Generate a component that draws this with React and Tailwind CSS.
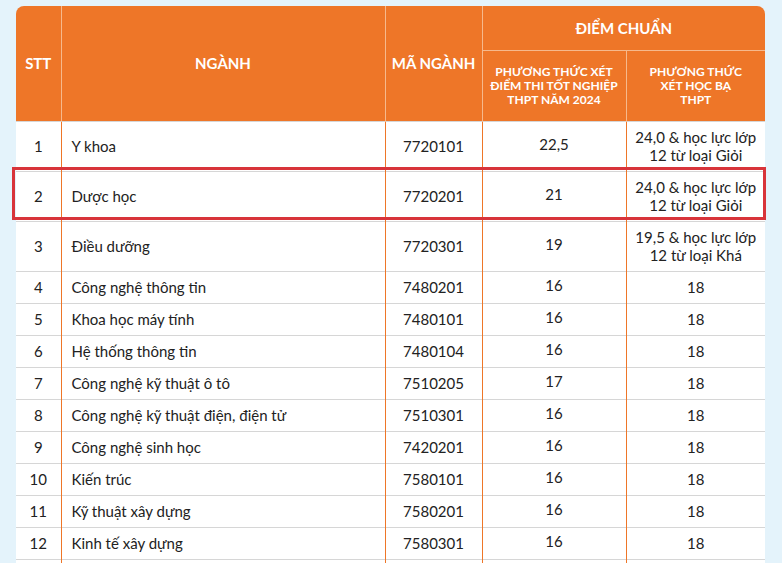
const ROWS = [
  ['1', 'Y khoa', '7720101', '22,5', '24,0 & học lực lớp 12 từ loại Giỏi'],
  ['2', 'Dược học', '7720201', '21', '24,0 & học lực lớp 12 từ loại Giỏi'],
  ['3', 'Điều dưỡng', '7720301', '19', '19,5 & học lực lớp 12 từ loại Khá'],
  ['4', 'Công nghệ thông tin', '7480201', '16', '18'],
  ['5', 'Khoa học máy tính', '7480101', '16', '18'],
  ['6', 'Hệ thống thông tin', '7480104', '16', '18'],
  ['7', 'Công nghệ kỹ thuật ô tô', '7510205', '17', '18'],
  ['8', 'Công nghệ kỹ thuật điện, điện tử', '7510301', '16', '18'],
  ['9', 'Công nghệ sinh học', '7420201', '16', '18'],
  ['10', 'Kiến trúc', '7580101', '16', '18'],
  ['11', 'Kỹ thuật xây dựng', '7580201', '16', '18'],
  ['12', 'Kinh tế xây dựng', '7580301', '16', '18'],
  ['', '', '', '', ''],
];

export default function App() {
  return (
    <div className="w-[782px] h-[563px] overflow-hidden bg-[#e4f3fb] pt-[6px] pl-[16px]" style={{ fontFamily: 'Lato, "Open Sans", sans-serif' }}>
      <div className="relative w-[749px]">
        <table className="w-[749px] table-fixed border-collapse text-[15px] text-[#222]">
          <colgroup>
            <col className="w-[45px]" />
            <col className="w-[324px]" />
            <col className="w-[97px]" />
            <col className="w-[144px]" />
            <col className="w-[139px]" />
          </colgroup>
          <thead className="text-white font-extrabold">
            <tr className="h-[44px]">
              <th rowSpan={2} className="bg-[#ee7628] rounded-tl-lg border-r border-[#f6b98c] text-[15px]">STT</th>
              <th rowSpan={2} className="bg-[#ee7628] border-r border-[#f6b98c] text-[15px]">NGÀNH</th>
              <th rowSpan={2} className="bg-[#ee7628] border-r border-[#f6b98c] text-[15px]">MÃ NGÀNH</th>
              <th colSpan={2} className="bg-[#ee7628] rounded-tr-lg border-b border-[#f6b98c] text-[15px]">ĐIỂM CHUẨN</th>
            </tr>
            <tr className="h-[71px]">
              <th className="bg-[#ee7628] border-r border-[#f6b98c] text-[12px] leading-[14px] px-1">PHƯƠNG THỨC XÉT ĐIỂM THI TỐT NGHIỆP THPT NĂM 2024</th>
              <th className="bg-[#ee7628] text-[12px] leading-[14px] px-5">PHƯƠNG THỨC XÉT HỌC BẠ THPT</th>
            </tr>
          </thead>
          <tbody className="bg-white">
            {ROWS.map((r, i) => (
              <tr key={i} className={i < 3 ? 'h-[50px] border-t border-[#d6d6d6]' : 'h-[32px] border-t border-[#d6d6d6]'}>
                <td className="text-center border-r border-[#ee7628]">{r[0]}</td>
                <td className="pl-[10px] border-r border-[#ee7628]">{r[1]}</td>
                <td className="text-center border-r border-[#ee7628]">{r[2]}</td>
                <td className="text-center border-r border-[#ee7628] pb-1">{r[3]}</td>
                <td className="text-center leading-[18px] px-1">{r[4]}</td>
              </tr>
            ))}
          </tbody>
        </table>
        <div className="absolute left-[-4px] top-[161px] w-[754px] h-[53px] border-[3px] border-[#d8343a]" />
      </div>
    </div>
  );
}
